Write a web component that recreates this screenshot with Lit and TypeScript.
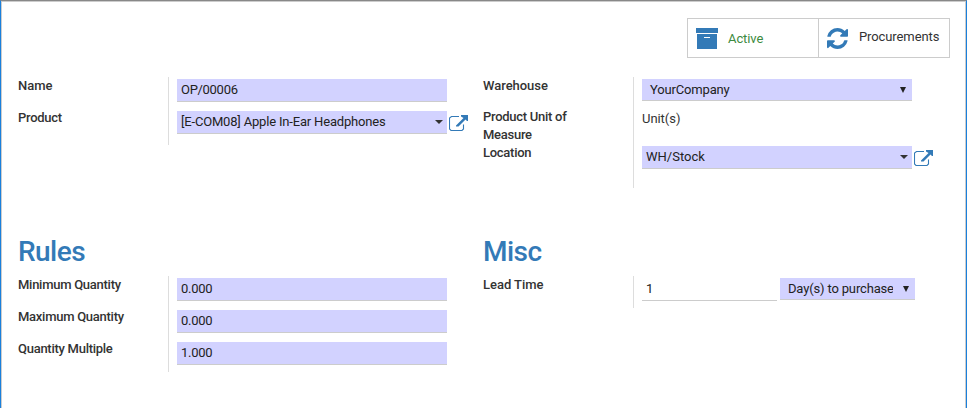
import { LitElement, html, css, svg } from "lit";
import { customElement } from "lit/decorators.js";

const openIcon = html`<svg class="open" width="20" height="17" viewBox="0 0 20 17">${svg`
  <path d="M10 1.500H2.500L.5 3V14L2 15.500H13L14.500 14V9.500" fill="none" stroke="currentColor" stroke-width="1.100"/>
  <path d="M12 0h7v6h-1l-1.500-1.500L9.500 11.500H7V10.500L14.500 3 12 1.500z" fill="currentColor"/>`}</svg>`;
const selectArrow = html`<svg class="arrow" width="6" height="6" viewBox="0 0 6 6"><path d="M0 0h6L3 6z" fill="#222"/></svg>`;
const caret = html`<svg class="caret" width="8" height="4" viewBox="0 0 8 4"><path d="M0 0h8L4 4z" fill="#333"/></svg>`;

@customElement("app-root")
export class AppRoot extends LitElement {
  static styles = css`
    :host { display: block; font: 13px/18px Roboto, sans-serif; color: #333; }
    * { box-sizing: border-box; }
    svg { display: block; flex: none; }
    .sheet { height: 408px; background: #fff; border: solid #1a80dc; border-width: 0 1px; border-top: 1px solid #888; }
    .inner { height: 407px; border: 1px solid #ccc; border-bottom: 0; padding: 16px 15px 0 16px; }
    .stats { display: flex; width: 263px; height: 40px; margin-left: auto; border: 1px solid #ccc; }
    .stat { display: flex; align-items: center; width: 130px; padding-left: 8px; letter-spacing: -.1px; }
    .stat + .stat { border-left: 1px solid #ccc; width: 131px; }
    .stat svg { color: #337ab7; margin-right: 10px; }
    .stat + .stat svg { margin-right: 11px; }
    .green { color: #3c8a40; padding-top: 2px; }
    .proc { padding-bottom: 2px; }
    .cols { display: grid; grid-template-columns: 465px 1fr; margin-top: 19px; height: 159px; }
    .cols.second { margin-top: 0; }
    .group { display: grid; grid-template-columns: 150px 1fr; align-items: start; }
    .labels { display: flex; flex-direction: column; }
    .label { height: 32px; font-weight: 500; color: #333; white-space: nowrap; letter-spacing: -.03px; }
    .label.tight { letter-spacing: -.27px; }
    .label.short { height: 31px; }
    .label.wrap { height: 36px; white-space: normal; width: 110px; }
    .values { border-left: 1px solid #ddd; padding: 2px 0 0 8px; }
    .h68 { height: 68px; } .h111 { height: 111px; } .h96 { height: 96px; } .h32 { height: 32px; }
    .row { display: flex; height: 32px; align-items: flex-start; }
    .field { display: flex; align-items: center; width: 270px; height: 23px; background: #d2d2ff; border-bottom: 1px solid #ccc; color: #222; padding: 0 4px; letter-spacing: -.18px; white-space: nowrap; }
    .field.wide { letter-spacing: 0; }
    .field.numeric { letter-spacing: -.3px; }
    .select { height: 22px; padding: 0 5px 0 8px; letter-spacing: -.16px; }
    .caret, .arrow { margin-left: auto; }
    .arrow { margin-right: 1px; }
    .open { color: #337ab7; margin: 4px 0 0 2px; }
    .plain { height: 35px; letter-spacing: -.05px; line-height: 16px; }
    .num { width: 135px; background: #fff; }
    .unit { width: 135px; margin-left: 3px; }
    .clip { width: 105px; overflow: hidden; }
    h2 { margin: 0; height: 40px; font: 500 28px/32px Roboto, sans-serif; color: #337ab7; letter-spacing: -.55px; }
  `;
  render() {
    return html`<div class="sheet"><div class="inner">
      <div class="stats">
        <div class="stat"><svg width="22" height="21" viewBox="0 0 22 21"><path d="M0 0h22v5H0zM1 6h20v15H1zM8 9v1h6V9z" fill="currentColor" fill-rule="evenodd"/></svg><span class="green">Active</span></div>
        <div class="stat"><svg width="21" height="21" viewBox="128 128 1536 1536"><path fill="currentColor" d="M1639 1056q0 5-1 7-64 268-268 434.500t-478 166.500q-146 0-282.500-55t-243.500-157l-129 129q-19 19-45 19t-45-19-19-45v-448q0-26 19-45t45-19h448q26 0 45 19t19 45-19 45l-137 137q71 66 161 102t187 36q134 0 250-65t186-179q11-17 53-117 8-23 30-23h192q13 0 22.500 9.500t9.500 22.500zm25-800v448q0 26-19 45t-45 19h-448q-26 0-45-19t-19-45 19-45l138-138q-148-137-349-137-134 0-250 65t-186 179q-11 17-53 117-8 23-30 23h-199q-13 0-22.500-9.500t-9.500-22.500v-7q65-268 270-434.500t480-166.500q146 0 284 55.500t245 156.500l130-129q19-19 45-19t45 19 19 45z"/></svg><span class="proc">Procurements</span></div>
      </div>
      <div class="cols">
        <div class="group">
          <div class="labels"><div class="label">Name</div><div class="label tight">Product</div></div>
          <div class="values h68">
            <div class="row"><div class="field numeric">OP/00006</div></div>
            <div class="row"><div class="field">[E-COM08] Apple In-Ear Headphones${caret}</div>${openIcon}</div>
          </div>
        </div>
        <div class="group">
          <div class="labels"><div class="label short">Warehouse</div><div class="label tight wrap">Product Unit of Measure</div><div class="label tight">Location</div></div>
          <div class="values h111">
            <div class="row"><div class="field select">YourCompany${selectArrow}</div></div>
            <div class="plain">Unit(s)</div>
            <div class="row"><div class="field wide">WH/Stock${caret}</div>${openIcon}</div>
          </div>
        </div>
      </div>
      <div class="cols second">
        <div><h2>Rules</h2><div class="group">
          <div class="labels"><div class="label tight">Minimum Quantity</div><div class="label tight">Maximum Quantity</div><div class="label tight">Quantity Multiple</div></div>
          <div class="values h96">
            <div class="row"><div class="field numeric">0.000</div></div>
            <div class="row"><div class="field numeric">0.000</div></div>
            <div class="row"><div class="field numeric">1.000</div></div>
          </div>
        </div></div>
        <div><h2>Misc</h2><div class="group">
          <div class="labels"><div class="label">Lead Time</div></div>
          <div class="values h32"><div class="row"><div class="field num">1</div><div class="field select unit"><span class="clip">Day(s) to purchase</span>${selectArrow}</div></div></div>
        </div></div>
      </div>
    </div></div>`;
  }
}
